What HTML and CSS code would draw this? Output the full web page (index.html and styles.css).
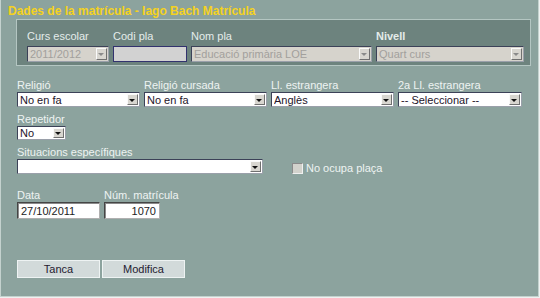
FILE: index.html
```html
<!DOCTYPE html>
<html lang="ca">
<head>
  <meta charset="UTF-8" />
  <title>Dades de la matrícula</title>
  <link rel="stylesheet" href="styles.css">
</head>
<body>

  <div class="panel">
    <h1 class="title">Dades de la matrícula - Iago Bach Matrícula</h1>

    <div class="plan-box">
      <div class="field w-curs">
        <span class="lbl">Curs escolar</span>
        <span class="sel disabled"><select disabled><option>2011/2012</option></select></span>
      </div>
      <div class="field w-codi">
        <span class="lbl">Codi pla</span>
        <input class="txt codi" type="text" disabled>
      </div>
      <div class="field w-nom">
        <span class="lbl">Nom pla</span>
        <span class="sel disabled"><select disabled><option>Educació primària LOE</option></select></span>
      </div>
      <div class="field w-nivell">
        <span class="lbl bold">Nivell</span>
        <span class="sel disabled"><select disabled><option>Quart curs</option></select></span>
      </div>
    </div>

    <div class="row row-lang">
      <div class="field w-col">
        <span class="lbl">Religió</span>
        <span class="sel"><select><option>No en fa</option></select></span>
      </div>
      <div class="field w-col">
        <span class="lbl">Religió cursada</span>
        <span class="sel"><select><option>No en fa</option></select></span>
      </div>
      <div class="field w-col">
        <span class="lbl">Ll. estrangera</span>
        <span class="sel"><select><option>Anglès</option></select></span>
      </div>
      <div class="field w-col2">
        <span class="lbl">2a Ll. estrangera</span>
        <span class="sel"><select><option>-- Seleccionar --</option></select></span>
      </div>
    </div>

    <div class="row row-rep">
      <div class="field w-rep">
        <span class="lbl">Repetidor</span>
        <span class="sel small"><select><option>No</option></select></span>
      </div>
    </div>

    <div class="row row-sit">
      <div class="field w-sit">
        <span class="lbl">Situacions específiques</span>
        <span class="sel"><select><option></option></select></span>
      </div>
      <label class="check">
        <input type="checkbox" disabled>
        <span>No ocupa plaça</span>
      </label>
    </div>

    <div class="row row-data">
      <div class="field w-data">
        <span class="lbl">Data</span>
        <input class="txt" type="text" value="27/10/2011">
      </div>
      <div class="field w-num">
        <span class="lbl">Núm. matrícula</span>
        <input class="txt num" type="text" value="1070">
      </div>
    </div>

    <div class="buttons">
      <button>Tanca</button>
      <button>Modifica</button>
    </div>
  </div>

</body>
</html>
```

FILE: styles.css
```css
body {
  margin: 0;
  background: #eef2f1;
  font-family: "Liberation Sans", Arial, sans-serif;
  font-size: 11px;
}

.panel {
  width: 539px;
  height: 297px;
  box-sizing: border-box;
  background: #8ca39e;
  border: 1px solid #c4d2ce;
  border-top: none;
  padding: 0 0 0 16px;
}

.title {
  margin: 0 0 1px -9px;
  padding-top: 4px;
  font-size: 12px;
  line-height: 14px;
  font-weight: bold;
  color: #f4d21e;
}

.plan-box {
  margin-left: -1px;
  width: 515px;
  height: 47px;
  box-sizing: border-box;
  background: #6d837e;
  border: 1px solid #b4c6c2;
  padding: 10px 0 0 10px;
  display: flex;
  gap: 4px;
}

.plan-box .lbl {
  margin-bottom: 4px;
  color: #e4ecea;
}

.row {
  display: flex;
  gap: 4px;
}

.field {
  display: flex;
  flex-direction: column;
}

.lbl {
  height: 12px;
  line-height: 12px;
  margin-bottom: 1px;
  color: #eef3f2;
  white-space: nowrap;
}

.lbl.bold {
  font-weight: bold;
}

.w-curs { width: 82px; }
.w-codi { width: 74px; }
.w-nom { width: 181px; }
.w-nivell { width: 148px; }
.w-col { width: 123px; }
.w-col2 { width: 124px; }
.w-rep { width: 49px; }
.w-sit { width: 246px; }
.w-data { width: 83px; }
.w-num { width: 56px; }

.row-lang { margin-top: 13px; }
.row-rep { margin-top: 6px; }
.row-sit { margin-top: 6px; align-items: flex-end; }
.row-data { margin-top: 15px; }

/* select with the old square arrow button */
.sel {
  position: relative;
  display: block;
  height: 15px;
}

.sel.small {
  height: 14px;
}

.plan-box .sel {
  height: 16px;
}

.sel select {
  appearance: none;
  -webkit-appearance: none;
  width: 100%;
  height: 100%;
  box-sizing: border-box;
  margin: 0;
  padding: 0 14px 0 2px;
  border: 1px solid #3c4258;
  border-right-color: #9aa0aa;
  border-bottom-color: #9aa0aa;
  border-radius: 0;
  background: #fff;
  font-family: inherit;
  font-size: 11px;
  color: #24142a;
  outline: none;
}

.sel::after {
  content: "";
  position: absolute;
  right: 2px;
  top: 2px;
  bottom: 2px;
  width: 9px;
  background: #d8d6d0;
  border: 1px solid;
  border-color: #fafafa #707070 #707070 #fafafa;
}

.sel::before {
  content: "";
  position: absolute;
  z-index: 1;
  right: 5px;
  top: 50%;
  margin-top: -1px;
  border-left: 3px solid transparent;
  border-right: 3px solid transparent;
  border-top: 3px solid #111;
}

.sel.disabled select {
  background: #d6d3cc;
  color: #a2a09c;
  opacity: 1;
}

.sel.disabled::before {
  border-top-color: #8a8a8a;
}

.txt {
  box-sizing: border-box;
  height: 17px;
  margin: 0;
  padding: 0 3px;
  border: 1px solid #454545;
  border-right-color: #b0b0b0;
  border-bottom-color: #b0b0b0;
  box-shadow: inset 1px 1px 0 #8a8a8a;
  background: #fff;
  font-family: inherit;
  font-size: 11px;
  color: #222;
  outline: none;
}

.txt.codi {
  height: 16px;
  background: #d2d2d2;
  border: 1px solid #32326e;
  box-shadow: none;
}

.txt.num {
  text-align: right;
}

.check {
  display: flex;
  align-items: center;
  gap: 3px;
  margin: 0 0 0 25px;
  color: #eef3f2;
}

.check input {
  appearance: none;
  -webkit-appearance: none;
  width: 11px;
  height: 11px;
  margin: 0;
  background: #d2d2cc;
  border: 1px solid;
  border-color: #8a8a8a #f0f0f0 #f0f0f0 #8a8a8a;
}

.buttons {
  display: flex;
  gap: 2px;
  margin-top: 41px;
}

.buttons button {
  width: 83px;
  height: 18px;
  padding: 0;
  background: #d2dada;
  border: 1px solid #eef3f3;
  font-family: inherit;
  font-size: 11px;
  color: #242030;
}
```
